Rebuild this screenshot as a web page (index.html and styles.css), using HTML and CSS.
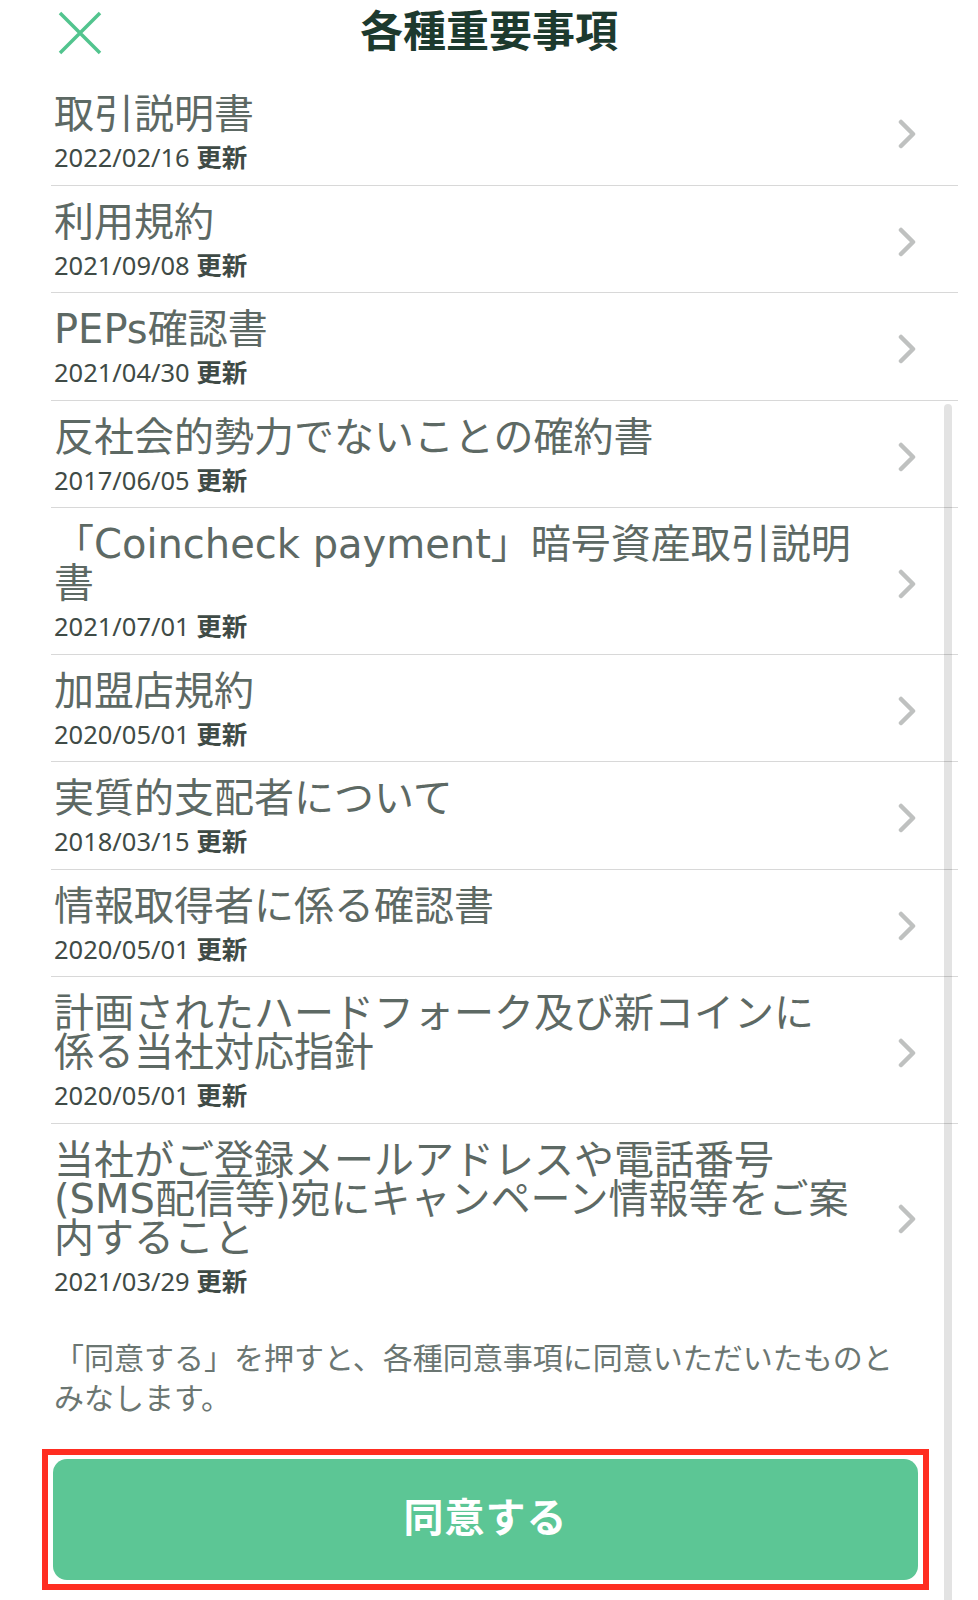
FILE: index.html
```html
<!DOCTYPE html>
<html lang="ja">
<head>
    <meta charset="UTF-8">
    <meta name="viewport" content="width=device-width, initial-scale=1.0">
    <title>各種重要事項</title>
    <link rel="stylesheet" href="styles.css">
</head>
<body>
    <div class="screen">
        <!-- ヘッダー -->
        <header class="header">
            <button class="close-btn" aria-label="閉じる">
                <svg width="44" height="44" viewBox="0 0 44 44">
                    <path d="M2 2 L42 42 M42 2 L2 42" stroke="#52c48e" stroke-width="3.5" fill="none"/>
                </svg>
            </button>
            <h1 class="title">各種重要事項</h1>
        </header>

        <!-- 書類一覧 -->
        <ul class="doc-list">
            <li class="doc-item">
                <div class="doc-text">
                    <p class="doc-name">取引説明書</p>
                    <p class="doc-date">2022/02/16 <b>更新</b></p>
                </div>
                <svg class="chevron" width="18" height="30" viewBox="0 0 18 30"><path d="M3 3 L15 15 L3 27"/></svg>
            </li>
            <li class="doc-item">
                <div class="doc-text">
                    <p class="doc-name">利用規約</p>
                    <p class="doc-date">2021/09/08 <b>更新</b></p>
                </div>
                <svg class="chevron" width="18" height="30" viewBox="0 0 18 30"><path d="M3 3 L15 15 L3 27"/></svg>
            </li>
            <li class="doc-item">
                <div class="doc-text">
                    <p class="doc-name">PEPs確認書</p>
                    <p class="doc-date">2021/04/30 <b>更新</b></p>
                </div>
                <svg class="chevron" width="18" height="30" viewBox="0 0 18 30"><path d="M3 3 L15 15 L3 27"/></svg>
            </li>
            <li class="doc-item">
                <div class="doc-text">
                    <p class="doc-name">反社会的勢力でないことの確約書</p>
                    <p class="doc-date">2017/06/05 <b>更新</b></p>
                </div>
                <svg class="chevron" width="18" height="30" viewBox="0 0 18 30"><path d="M3 3 L15 15 L3 27"/></svg>
            </li>
            <li class="doc-item">
                <div class="doc-text">
                    <p class="doc-name">「Coincheck payment」暗号資産取引説明書</p>
                    <p class="doc-date">2021/07/01 <b>更新</b></p>
                </div>
                <svg class="chevron" width="18" height="30" viewBox="0 0 18 30"><path d="M3 3 L15 15 L3 27"/></svg>
            </li>
            <li class="doc-item">
                <div class="doc-text">
                    <p class="doc-name">加盟店規約</p>
                    <p class="doc-date">2020/05/01 <b>更新</b></p>
                </div>
                <svg class="chevron" width="18" height="30" viewBox="0 0 18 30"><path d="M3 3 L15 15 L3 27"/></svg>
            </li>
            <li class="doc-item">
                <div class="doc-text">
                    <p class="doc-name">実質的支配者について</p>
                    <p class="doc-date">2018/03/15 <b>更新</b></p>
                </div>
                <svg class="chevron" width="18" height="30" viewBox="0 0 18 30"><path d="M3 3 L15 15 L3 27"/></svg>
            </li>
            <li class="doc-item">
                <div class="doc-text">
                    <p class="doc-name">情報取得者に係る確認書</p>
                    <p class="doc-date">2020/05/01 <b>更新</b></p>
                </div>
                <svg class="chevron" width="18" height="30" viewBox="0 0 18 30"><path d="M3 3 L15 15 L3 27"/></svg>
            </li>
            <li class="doc-item">
                <div class="doc-text">
                    <p class="doc-name">計画されたハードフォーク及び新コインに係る当社対応指針</p>
                    <p class="doc-date">2020/05/01 <b>更新</b></p>
                </div>
                <svg class="chevron" width="18" height="30" viewBox="0 0 18 30"><path d="M3 3 L15 15 L3 27"/></svg>
            </li>
            <li class="doc-item">
                <div class="doc-text">
                    <p class="doc-name">当社がご登録メールアドレスや電話番号(SMS配信等)宛にキャンペーン情報等をご案内すること</p>
                    <p class="doc-date">2021/03/29 <b>更新</b></p>
                </div>
                <svg class="chevron" width="18" height="30" viewBox="0 0 18 30"><path d="M3 3 L15 15 L3 27"/></svg>
            </li>
        </ul>

        <p class="consent-note">「同意する」を押すと、各種同意事項に同意いただいたものとみなします。</p>

        <!-- 同意ボタン -->
        <div class="agree-frame">
            <button class="agree-btn">同意する</button>
        </div>

        <div class="scrollbar"></div>
    </div>
</body>
</html>
```

FILE: styles.css
```css
/* Reset */
* {
    margin: 0;
    padding: 0;
    box-sizing: border-box;
}

body {
    font-family: 'Noto Sans', 'Noto Sans CJK JP', sans-serif;
    background-color: #fff;
    color: #5a6661;
}

.screen {
    position: relative;
    width: 978px;
    min-height: 100vh;
}

/* ヘッダー */
.header {
    display: grid;
    grid-template-columns: 1fr auto 1fr;
    align-items: center;
    height: 66px;
    padding: 0 58px;
}

.close-btn {
    justify-self: start;
    width: 44px;
    height: 44px;
    border: none;
    background: none;
}

.close-btn svg {
    display: block;
}

.title {
    font-size: 43px;
    font-weight: 700;
    line-height: 1;
    padding-bottom: 6px;
    color: #1d3a2e;
}

/* 書類一覧 */
.doc-list {
    list-style: none;
    margin: 12px 20px 0 51px;
}

.doc-item {
    display: flex;
    align-items: center;
    padding: 17px 42px 11.5px 3px;
    border-bottom: 1px solid #d8d8d8;
}

.doc-item:last-child {
    border-bottom: none;
}

.doc-text {
    width: 799px;
}

.doc-name {
    font-family: 'DejaVu Sans', 'Noto Sans CJK JP', sans-serif;
    font-size: 40px;
    line-height: 39px;
    color: #5d6964;
}

.doc-date {
    margin-top: 7px;
    font-size: 25.5px;
    line-height: 32px;
    color: #3f4b46;
}

.doc-date b {
    font-weight: 700;
}

.chevron {
    margin-left: auto;
    fill: none;
    stroke: #bfc1c0;
    stroke-width: 4.5;
    stroke-linecap: round;
    stroke-linejoin: round;
}

/* 注意書き */
.consent-note {
    width: 860px;
    margin: 30px 0 0 54px;
    font-size: 30px;
    line-height: 40px;
    color: #6b7672;
}

/* 同意ボタン */
.agree-frame {
    width: 887px;
    margin: 31px 0 0 42px;
    padding: 4px 5px;
    border: 6px solid #ff2d21;
}

.agree-btn {
    display: block;
    width: 100%;
    height: 121px;
    padding-bottom: 10px;
    border: none;
    border-radius: 14px;
    background-color: #5cc695;
    color: #fff;
    font-family: 'Noto Sans CJK JP', sans-serif;
    font-size: 40px;
    font-weight: 700;
    letter-spacing: 1px;
}

/* スクロールバー */
.scrollbar {
    position: absolute;
    left: 944px;
    top: 404px;
    bottom: 0;
    width: 8px;
    border-radius: 4px 4px 0 0;
    background-color: rgba(0, 0, 0, 0.11);
}
```
